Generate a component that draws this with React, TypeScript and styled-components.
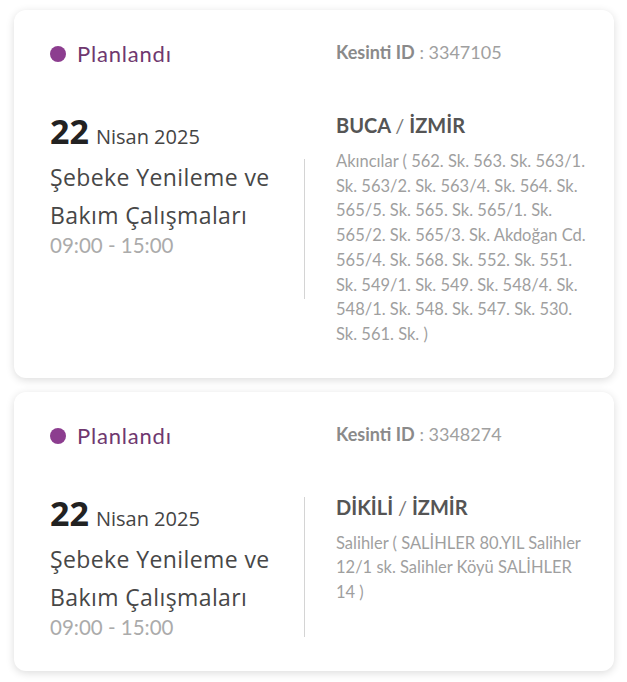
import React from "react";
import styled, { createGlobalStyle } from "styled-components";

const GlobalStyle = createGlobalStyle`
  html, body {
    margin: 0;
    padding: 0;
    background: #ffffff;
  }
  body {
    font-family: "Lato", "Noto Sans", sans-serif;
  }
`;

const List = styled.div`
  display: flex;
  flex-direction: column;
  gap: 14px;
  padding: 10px 13px 10px 14px;
`;

const Card = styled.article`
  display: grid;
  grid-template-columns: 254px 1px 281px;
  row-gap: 46px;
  padding: 32px 28px 31px 36px;
  background: #ffffff;
  border-radius: 12px;
  box-shadow: 0 2px 9px rgba(0, 0, 0, 0.14);
`;

const Status = styled.div`
  grid-column: 1;
  display: flex;
  align-items: center;
  gap: 11px;
  font-family: "Lato", sans-serif;
  font-size: 22px;
  letter-spacing: 0.8px;
  line-height: 24px;
  color: #6f386f;
`;

const Dot = styled.span`
  width: 16px;
  height: 16px;
  border-radius: 50%;
  background: #8c3d8f;
`;

const CutId = styled.div`
  grid-column: 3;
  padding-left: 31px;
  font-family: "Lato", sans-serif;
  font-size: 18px;
  line-height: 22px;
  color: #a0a0a0;
  margin-top: -1px;

  b {
    color: #8a8a8a;
    font-weight: 700;
  }
`;

const DateBlock = styled.div`
  grid-column: 1;
  padding-right: 12px;
  margin-top: -1px;
`;

const DateLine = styled.div`
  display: flex;
  align-items: baseline;
  gap: 7px;
  margin-bottom: 7px;
  font-family: "Open Sans", sans-serif;
  color: #444444;
`;

const Day = styled.span`
  font-size: 34px;
  font-weight: 700;
  color: #222222;
  line-height: 40px;
`;

const Month = styled.span`
  font-size: 20px;
`;

const Title = styled.div`
  font-family: "Open Sans", sans-serif;
  font-size: 23px;
  letter-spacing: 0.4px;
  line-height: 38px;
  color: #474747;
`;

const Time = styled.div`
  margin-top: -2px;
  font-family: "Lato", sans-serif;
  font-size: 20.5px;
  line-height: 26px;
  color: #ababab;
`;

const Divider = styled.div`
  grid-column: 2;
  align-self: center;
  width: 1px;
  height: 140px;
  background: #d4d4d4;
`;

const Place = styled.div`
  grid-column: 3;
  padding-left: 31px;
`;

const District = styled.h3`
  margin: 0 0 11px;
  font-family: "Lato", sans-serif;
  font-size: 20px;
  line-height: 26px;
  font-weight: 700;
  color: #555555;

  span {
    font-weight: 400;
    color: #777777;
  }
`;

const Streets = styled.p`
  margin: 0;
  font-family: "Lato", sans-serif;
  font-size: 16.5px;
  line-height: 24.7px;
  color: #9f9f9f;
`;

interface Outage {
  id: string;
  district: string;
  city: string;
  streets: string;
}

const outages: Outage[] = [
  {
    id: "3347105",
    district: "BUCA",
    city: "İZMİR",
    streets:
      "Akıncılar ( 562. Sk. 563. Sk. 563/1. Sk. 563/2. Sk. 563/4. Sk. 564. Sk. 565/5. Sk. 565. Sk. 565/1. Sk. 565/2. Sk. 565/3. Sk. Akdoğan Cd. 565/4. Sk. 568. Sk. 552. Sk. 551. Sk. 549/1. Sk. 549. Sk. 548/4. Sk. 548/1. Sk. 548. Sk. 547. Sk. 530. Sk. 561. Sk. )",
  },
  {
    id: "3348274",
    district: "DİKİLİ",
    city: "İZMİR",
    streets: "Salihler ( SALİHLER 80.YIL Salihler 12/1 sk. Salihler Köyü SALİHLER 14 )",
  },
];

const OutageCard = ({ item }: { item: Outage }) => (
  <Card>
    <Status>
      <Dot />
      Planlandı
    </Status>
    <CutId>
      <b>Kesinti ID</b> : {item.id}
    </CutId>
    <DateBlock>
      <DateLine>
        <Day>22</Day>
        <Month>Nisan 2025</Month>
      </DateLine>
      <Title>Şebeke Yenileme ve Bakım Çalışmaları</Title>
      <Time>09:00 - 15:00</Time>
    </DateBlock>
    <Divider />
    <Place>
      <District>
        {item.district} <span>/</span> {item.city}
      </District>
      <Streets>{item.streets}</Streets>
    </Place>
  </Card>
);

const App = () => (
  <>
    <GlobalStyle />
    <List>
      {outages.map((o) => (
        <OutageCard key={o.id} item={o} />
      ))}
    </List>
  </>
);

export default App;
